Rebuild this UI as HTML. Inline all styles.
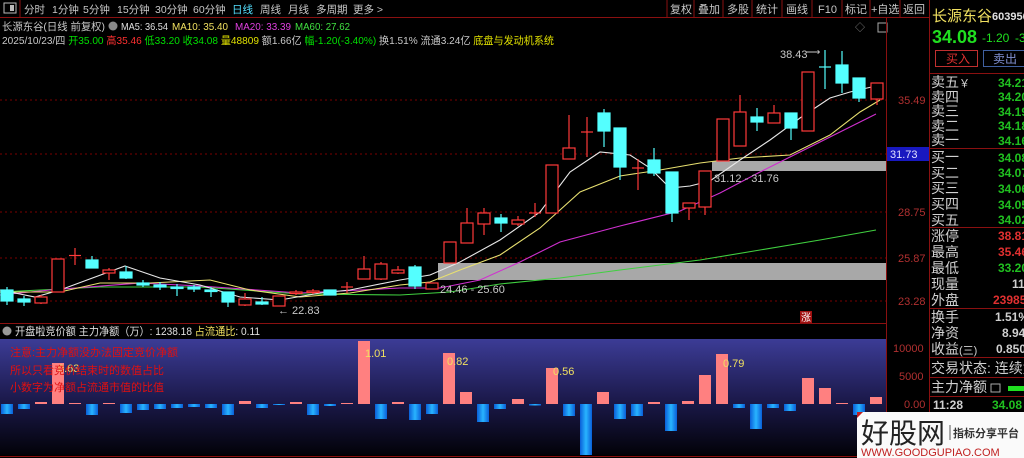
<!DOCTYPE html>
<html><head><meta charset="utf-8"><style>
html,body{margin:0;padding:0;background:#000;width:1024px;height:458px;overflow:hidden}
svg{display:block}
text{font-family:"Liberation Sans","Noto Sans CJK SC",sans-serif}
</style></head><body>
<svg width="1024" height="458" viewBox="0 0 1024 458" xmlns="http://www.w3.org/2000/svg">
<defs>
<linearGradient id="ig" x1="0" y1="0" x2="0" y2="1">
<stop offset="0" stop-color="#3c3c96"/><stop offset="0.55" stop-color="#1a1848"/><stop offset="1" stop-color="#020208"/>
</linearGradient>
<linearGradient id="bb" x1="0" y1="0" x2="1" y2="0">
<stop offset="0" stop-color="#0a5fd8"/><stop offset="0.5" stop-color="#28b4ff"/><stop offset="1" stop-color="#0a5fd8"/>
</linearGradient>
</defs>
<rect width="1024" height="458" fill="#000"/>
<!-- top tabs -->
<g font-size="10.5" fill="#c8c8c8">
<rect x="4" y="3" width="12" height="10" fill="none" stroke="#bbb"/><rect x="10" y="5" width="4" height="6" fill="#bbb"/>
<line x1="20" y1="0" x2="20" y2="17" stroke="#8a1010"/>
<text x="24" y="13">分时</text><text x="52" y="13">1分钟</text><text x="83" y="13">5分钟</text><text x="117" y="13">15分钟</text><text x="155" y="13">30分钟</text><text x="193" y="13">60分钟</text>
<text x="232" y="13" fill="#54e0ff">日线</text><text x="260" y="13">周线</text><text x="288" y="13">月线</text><text x="316" y="13">多周期</text><text x="353" y="13">更多 &gt;</text>
</g>
<line x1="0" y1="17.5" x2="929" y2="17.5" stroke="#8a1010"/>
<g font-size="11.5" fill="#c8c8c8" stroke="#8a1010">
<line x1="667" y1="0" x2="667" y2="17"/><line x1="694" y1="0" x2="694" y2="17"/><line x1="723" y1="0" x2="723" y2="17"/><line x1="752" y1="0" x2="752" y2="17"/><line x1="782" y1="0" x2="782" y2="17"/><line x1="812" y1="0" x2="812" y2="17"/><line x1="842" y1="0" x2="842" y2="17"/><line x1="870" y1="0" x2="870" y2="17"/><line x1="900" y1="0" x2="900" y2="17"/>
</g>
<g font-size="11" fill="#c8c8c8">
<text x="670" y="13">复权</text><text x="698" y="13">叠加</text><text x="727" y="13">多股</text><text x="756" y="13">统计</text><text x="786" y="13">画线</text><text x="818" y="13">F10</text><text x="845" y="13">标记</text><text x="871" y="13">+自选</text><text x="903" y="13">返回</text>
</g>
<!-- info rows -->
<g font-size="10.5">
<text x="2" y="30" fill="#c8c8c8" textLength="103" lengthAdjust="spacingAndGlyphs">长源东谷(日线 前复权)</text>
<circle cx="113" cy="26" r="4.5" fill="#888"/>
<text x="121" y="30" fill="#e0e0e0" textLength="47" lengthAdjust="spacingAndGlyphs">MA5: 36.54</text>
<text x="172" y="30" fill="#f0e060" textLength="56" lengthAdjust="spacingAndGlyphs">MA10: 35.40</text>
<text x="235" y="30" fill="#e040e0" textLength="56" lengthAdjust="spacingAndGlyphs">MA20: 33.39</text>
<text x="295" y="30" fill="#40e040" textLength="55" lengthAdjust="spacingAndGlyphs">MA60: 27.62</text>
<text x="2" y="44" fill="#c8c8c8" textLength="552" lengthAdjust="spacingAndGlyphs">2025/10/23/四 <tspan fill="#00e000">开35.00</tspan> <tspan fill="#ff3030">高35.46</tspan> <tspan fill="#00e000">低33.20</tspan> <tspan fill="#00e000">收34.08</tspan> <tspan fill="#e0e000">量48809</tspan> 额1.66亿 <tspan fill="#00e000">幅-1.20(-3.40%)</tspan> 换1.51% 流通3.24亿 <tspan fill="#e0e000">底盘与发动机系统</tspan></text>
<text x="855" y="31" fill="#888" font-size="10">◇</text>
<rect x="878" y="23" width="9" height="9" fill="none" stroke="#aaa"/>
</g>
<!-- grid -->
<g stroke="#7a0000" stroke-dasharray="2,3">
<line x1="0" y1="100" x2="886" y2="100"/><line x1="0" y1="154" x2="886" y2="154"/><line x1="0" y1="212" x2="886" y2="212"/><line x1="0" y1="258" x2="886" y2="258"/><line x1="0" y1="301" x2="886" y2="301"/>
</g>
<!-- gray zones -->
<rect x="438" y="263" width="448" height="17" fill="#a8a8a8"/>
<rect x="712" y="161" width="174" height="10" fill="#a8a8a8"/>
<!-- MAs -->
<g fill="none" stroke-width="1.1">
<polyline stroke="#40d040" points="0,292 100,287 200,287 300,294 400,295 450,292 500,284 560,278 620,270 700,260 760,250 820,240 876,230"/>
<polyline stroke="#d030d0" points="0,295 50,290 140,283 200,286 300,293 400,288 440,288 480,280 520,262 560,242 620,226 680,211 720,193 760,172 800,152 840,132 876,114"/>
<polyline stroke="#e8e070" points="0,292 60,292 100,283 150,283 210,280 250,290 300,297 350,293 400,285 430,282 460,270 500,255 540,228 580,192 620,176 660,170 700,163 740,158 790,155 830,135 860,112 880,100"/>
<polyline stroke="#e8e8e8" points="0,290 35,297 60,290 125,266 160,278 200,285 240,297 280,300 320,293 350,290 400,280 430,275 460,262 500,240 540,212 570,172 600,152 630,155 650,168 670,188 690,186 710,181 740,160 770,140 800,118 830,98 850,92 880,85"/>
</g>
<!-- candles -->
<g stroke-width="1.2">
<g stroke="#ff3a3a" fill="#000">
<line x1="41" y1="295" x2="41" y2="304"/><rect x="35" y="297" width="12" height="6"/>
<rect x="52" y="259" width="12" height="33"/>
<line x1="75" y1="248" x2="75" y2="265"/><line x1="69" y1="255.5" x2="81" y2="255.5"/>
<line x1="109" y1="268" x2="109" y2="280"/><rect x="103" y="270" width="12" height="3"/>
<line x1="245" y1="293" x2="245" y2="306"/><rect x="239" y="299" width="12" height="6"/>
<rect x="273" y="296" width="12" height="10"/>
<line x1="296" y1="290" x2="296" y2="295"/><rect x="290" y="292" width="12" height="1.5"/>
<line x1="313" y1="289" x2="313" y2="294"/><rect x="307" y="291" width="12" height="1.5"/>
<line x1="347" y1="282" x2="347" y2="293"/><line x1="341" y1="287" x2="353" y2="287"/>
<line x1="364" y1="256" x2="364" y2="269"/><rect x="358" y="269" width="12" height="10"/>
<line x1="381" y1="262" x2="381" y2="280"/><rect x="375" y="264" width="12" height="15"/>
<line x1="398" y1="266" x2="398" y2="274"/><rect x="392" y="270" width="12" height="3"/>
<rect x="426" y="283" width="12" height="6"/>
<rect x="444" y="242" width="12" height="21"/>
<line x1="467" y1="208" x2="467" y2="223"/><rect x="461" y="223" width="12" height="20"/>
<line x1="484" y1="208" x2="484" y2="235"/><rect x="478" y="213" width="12" height="11"/>
<line x1="518" y1="216" x2="518" y2="226"/><rect x="512" y="220" width="12" height="4"/>
<line x1="535" y1="203" x2="535" y2="217"/><line x1="529" y1="213" x2="541" y2="213"/>
<rect x="546" y="165" width="12" height="48"/>
<line x1="569" y1="115" x2="569" y2="148"/><rect x="563" y="148" width="12" height="11"/>
<line x1="587" y1="117" x2="587" y2="157"/><line x1="581" y1="132" x2="593" y2="132"/>
<line x1="638" y1="159" x2="638" y2="190"/><line x1="632" y1="168" x2="644" y2="168"/>
<line x1="689" y1="208" x2="689" y2="220"/><rect x="683" y="203" width="12" height="5"/>
<line x1="705" y1="207" x2="705" y2="215"/><rect x="699" y="171" width="12" height="36"/>
<rect x="717" y="119" width="12" height="42"/>
<line x1="740" y1="95" x2="740" y2="112"/><rect x="734" y="112" width="12" height="34"/>
<line x1="774" y1="105" x2="774" y2="113"/><rect x="768" y="113" width="12" height="10"/>
<rect x="802" y="72" width="12" height="59"/>
<line x1="877" y1="99" x2="877" y2="105"/><rect x="871" y="83" width="12" height="16"/>
</g>
<g stroke="#54ffff" fill="#54ffff">
<line x1="7" y1="287" x2="7" y2="305"/><rect x="1" y="290" width="12" height="11"/>
<line x1="24" y1="296" x2="24" y2="306"/><rect x="18" y="299" width="12" height="3"/>
<line x1="92" y1="256" x2="92" y2="268"/><rect x="86" y="260" width="12" height="8"/>
<line x1="126" y1="266" x2="126" y2="279"/><rect x="120" y="272" width="12" height="6"/>
<line x1="143" y1="280" x2="143" y2="287"/><rect x="137" y="283" width="12" height="2"/>
<line x1="160" y1="282" x2="160" y2="290"/><rect x="154" y="285" width="12" height="2"/>
<line x1="177" y1="284" x2="177" y2="296"/><rect x="171" y="287" width="12" height="1.5"/>
<line x1="194" y1="285" x2="194" y2="292"/><rect x="188" y="287" width="12" height="2"/>
<line x1="211" y1="287" x2="211" y2="297"/><rect x="205" y="290" width="12" height="1.5"/>
<line x1="228" y1="292" x2="228" y2="307"/><rect x="222" y="292" width="12" height="10"/>
<line x1="262" y1="297" x2="262" y2="305"/><rect x="256" y="302" width="12" height="2"/>
<rect x="324" y="290" width="12" height="5"/>
<line x1="415" y1="265" x2="415" y2="289"/><rect x="409" y="267" width="12" height="19"/>
<line x1="501" y1="214" x2="501" y2="232"/><rect x="495" y="218" width="12" height="5"/>
<line x1="604" y1="109" x2="604" y2="147"/><rect x="598" y="113" width="12" height="18"/>
<line x1="620" y1="128" x2="620" y2="180"/><rect x="614" y="128" width="12" height="39"/>
<line x1="654" y1="148" x2="654" y2="176"/><rect x="648" y="160" width="12" height="13"/>
<line x1="672" y1="172" x2="672" y2="222"/><rect x="666" y="172" width="12" height="41"/>
<line x1="757" y1="108" x2="757" y2="131"/><rect x="751" y="117" width="12" height="5"/>
<line x1="791" y1="113" x2="791" y2="140"/><rect x="785" y="113" width="12" height="15"/>
<line x1="825" y1="50" x2="825" y2="89"/><line x1="819" y1="67" x2="831" y2="67"/>
<line x1="842" y1="51" x2="842" y2="93"/><rect x="836" y="65" width="12" height="18"/>
<line x1="859" y1="78" x2="859" y2="102"/><rect x="853" y="78" width="12" height="20"/>
</g>
</g>
<g font-size="11" fill="#c8c8c8">
<text x="440" y="293">24.46 - 25.60</text>
<text x="714" y="182">31.12 - 31.76</text>
<text x="780" y="58">38.43</text><text x="806" y="55" font-size="10">⟶</text>
<text x="278" y="314">← 22.83</text>
</g>
<rect x="800" y="311" width="12" height="12" fill="#a01010"/><text x="801" y="321" font-size="10" fill="#fff">涨</text>
<!-- axis -->
<line x1="886.5" y1="18" x2="886.5" y2="458" stroke="#8a1010"/>
<line x1="929.5" y1="0" x2="929.5" y2="458" stroke="#8a1010"/>
<g font-size="11" fill="#b03030">
<text x="898" y="104">35.49</text><text x="898" y="216">28.75</text><text x="898" y="262">25.87</text><text x="898" y="305">23.28</text>
<text x="893" y="352">10000</text><text x="899" y="380">5000</text><text x="904" y="408">0.00</text>
</g>
<rect x="887" y="147" width="42" height="14" fill="#1818c0"/><text x="890" y="158" font-size="11" fill="#e0e0ff">31.73</text>
<!-- sub panel -->
<line x1="0" y1="323.5" x2="886" y2="323.5" stroke="#8a1010"/>
<circle cx="7" cy="331" r="4.5" fill="#999"/>
<text x="15" y="335" font-size="11" fill="#e0e0e0" textLength="245" lengthAdjust="spacingAndGlyphs">开盘啦竞价额 主力净额（万）: 1238.18 <tspan fill="#f0e060">占流通比</tspan>: 0.11</text>
<rect x="0" y="339" width="886" height="116" fill="url(#ig)"/>
<line x1="0" y1="456.5" x2="886" y2="456.5" stroke="#8a1010"/>
<g fill="#ff8080">
<rect x="35" y="402" width="12" height="2"/><rect x="52" y="363" width="12" height="41"/><rect x="69" y="403" width="12" height="1"/><rect x="103" y="403" width="12" height="1"/>
<rect x="239" y="401" width="12" height="3"/><rect x="290" y="402" width="12" height="2"/><rect x="341" y="403" width="12" height="1"/><rect x="358" y="341" width="12" height="63"/>
<rect x="392" y="402" width="12" height="2"/><rect x="443" y="353" width="12" height="51"/><rect x="460" y="392" width="12" height="12"/>
<rect x="512" y="399" width="12" height="5"/><rect x="546" y="368" width="12" height="36"/><rect x="597" y="392" width="12" height="12"/>
<rect x="648" y="402" width="12" height="2"/><rect x="682" y="401" width="12" height="3"/><rect x="699" y="375" width="12" height="29"/><rect x="716" y="354" width="12" height="50"/>
<rect x="802" y="378" width="12" height="26"/><rect x="819" y="388" width="12" height="16"/><rect x="836" y="403" width="12" height="1"/><rect x="870" y="397" width="12" height="7"/>
</g>
<g fill="url(#bb)">
<rect x="1" y="404" width="12" height="10"/><rect x="18" y="404" width="12" height="5"/><rect x="86" y="404" width="12" height="11"/><rect x="120" y="404" width="12" height="9"/>
<rect x="137" y="404" width="12" height="6"/><rect x="154" y="404" width="12" height="5"/><rect x="171" y="404" width="12" height="4"/><rect x="188" y="404" width="12" height="3"/>
<rect x="205" y="404" width="12" height="4"/><rect x="222" y="404" width="12" height="11"/><rect x="256" y="404" width="12" height="4"/><rect x="273" y="404" width="12" height="1"/>
<rect x="307" y="404" width="12" height="11"/><rect x="324" y="404" width="12" height="2"/><rect x="375" y="404" width="12" height="15"/><rect x="409" y="404" width="12" height="16"/>
<rect x="426" y="404" width="12" height="10"/><rect x="477" y="404" width="12" height="18"/><rect x="494" y="404" width="12" height="5"/><rect x="529" y="404" width="12" height="1.5"/>
<rect x="563" y="404" width="12" height="12"/><rect x="580" y="404" width="12" height="51"/><rect x="614" y="404" width="12" height="15"/><rect x="631" y="404" width="12" height="12"/>
<rect x="665" y="404" width="12" height="27"/><rect x="733" y="404" width="12" height="4"/><rect x="750" y="404" width="12" height="25"/><rect x="767" y="404" width="12" height="4"/>
<rect x="784" y="404" width="12" height="7"/><rect x="853" y="404" width="12" height="11"/>
</g>
<g font-size="11" fill="#f0e060">
<text x="58" y="372">0.63</text><text x="365" y="357">1.01</text><text x="447" y="365">0.82</text><text x="553" y="375">0.56</text><text x="723" y="367">0.79</text>
</g>
<g font-size="11" fill="#e01010">
<text x="10" y="356">注意:主力净额没办法固定竞价净额</text>
<text x="10" y="374">所以只看竞价结束时的数值占比</text>
<text x="10" y="391">小数字为净额占流通市值的比值</text>
</g>
<!-- right panel -->
<text x="932" y="21" font-size="15" fill="#f0e060">长源东谷</text>
<text x="992" y="20" font-size="11" fill="#e0e0e0" font-weight="bold">603956</text>
<text x="932" y="43" font-size="18" fill="#20e020" font-weight="bold">34.08</text>
<text x="982" y="42" font-size="12" fill="#20e020">-1.20</text><text x="1015" y="42" font-size="12" fill="#20e020">-3</text>
<rect x="935.5" y="50.5" width="42" height="16" fill="none" stroke="#c03030"/><text x="946" y="63" font-size="12" fill="#e03030">买入</text>
<rect x="983.5" y="50.5" width="42" height="16" fill="none" stroke="#4060a0"/><text x="993" y="63" font-size="12" fill="#8090d0">卖出</text>
<g stroke="#8a1010">
<line x1="930" y1="73.5" x2="1024" y2="73.5"/><line x1="930" y1="148.5" x2="1024" y2="148.5"/><line x1="930" y1="227.5" x2="1024" y2="227.5"/>
<line x1="930" y1="308.5" x2="1024" y2="308.5"/><line x1="930" y1="357.5" x2="1024" y2="357.5"/><line x1="930" y1="377.5" x2="1024" y2="377.5"/><line x1="930" y1="396.5" x2="1024" y2="396.5"/>
</g>
<g font-size="14" fill="#d0d0d0">
<text x="931" y="87">卖五<tspan font-size="11">￥</tspan></text><text x="931" y="102">卖四</text><text x="931" y="116">卖三</text><text x="931" y="131">卖二</text><text x="931" y="145">卖一</text>
<text x="931" y="162">买一</text><text x="931" y="178">买二</text><text x="931" y="193">买三</text><text x="931" y="209">买四</text><text x="931" y="225">买五</text>
<text x="931" y="241">涨停</text><text x="931" y="257">最高</text><text x="931" y="273">最低</text><text x="931" y="289">现量</text><text x="931" y="305">外盘</text>
<text x="931" y="322">换手</text><text x="931" y="338">净资</text><text x="931" y="354">收益<tspan font-size="11">(三)</tspan></text>
<text x="931" y="373">交易状态: 连续竞</text>
<text x="931" y="392">主力净额</text>
</g>
<rect x="991" y="384" width="9" height="8" fill="none" stroke="#aaa"/>
<rect x="1008" y="386" width="16" height="5" fill="#20e020"/>
<g font-size="12" font-weight="bold" fill="#20c020">
<text x="998" y="87">34.21</text><text x="998" y="101">34.20</text><text x="998" y="116">34.19</text><text x="998" y="130">34.18</text><text x="998" y="145">34.16</text>
<text x="998" y="162">34.08</text><text x="998" y="177">34.07</text><text x="998" y="193">34.06</text><text x="998" y="209">34.05</text><text x="998" y="224">34.02</text>
<text x="998" y="240" fill="#e03030">38.81</text><text x="998" y="256" fill="#e03030">35.46</text><text x="998" y="272">33.20</text><text x="1012" y="288" fill="#d0d0d0">11</text><text x="993" y="304" fill="#e03030">23985</text>
<text x="995" y="321" fill="#d0d0d0">1.51%</text><text x="1002" y="337" fill="#d0d0d0">8.94</text><text x="996" y="353" fill="#d0d0d0">0.850</text>
<text x="933" y="409" fill="#d0d0d0">11:28</text><text x="992" y="409">34.08</text>
</g>
<!-- watermark -->
<rect x="857" y="412" width="167" height="46" fill="#fafafa"/>
<path d="M857 412 l6 0 l-6 6z" fill="#c02020"/>
<text x="861" y="443" font-size="28" fill="#222">好股网</text>
<line x1="950" y1="425" x2="950" y2="440" stroke="#555"/>
<text x="953" y="437" font-size="11" fill="#333" font-weight="bold">指标分享平台</text>
<text x="861" y="456" font-size="11" fill="#c02020">WWW.GOODGUPIAO.COM</text>
</svg>
</body></html>
